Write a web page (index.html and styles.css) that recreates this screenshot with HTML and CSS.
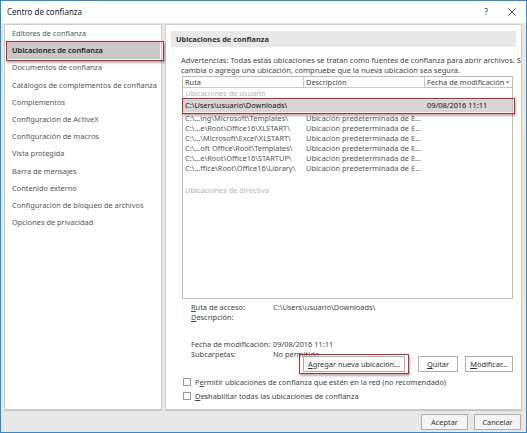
FILE: index.html
```html
<!DOCTYPE html>
<html lang="es">
<head>
<meta charset="utf-8">
<title>Centro de confianza</title>
<link rel="stylesheet" href="styles.css">
</head>
<body>
<div class="window">
  <div class="titlebar">
    <span class="title">Centro de confianza</span>
    <span class="tb-btns">
      <span class="help">?</span>
      <svg class="close" width="8" height="8" viewBox="0 0 8 8"><path d="M0.5 0.5L7.5 7.5M7.5 0.5L0.5 7.5" stroke="#444" stroke-width="0.9" fill="none"/></svg>
    </span>
  </div>
  <div class="main">
    <nav class="nav">
      <div class="nav-item">Editores de confianza</div>
      <div class="nav-item selected annotated">Ubicaciones de confianza</div>
      <div class="nav-item">Documentos de confianza</div>
      <div class="nav-item">Catálogos de complementos de confianza</div>
      <div class="nav-item">Complementos</div>
      <div class="nav-item">Configuración de ActiveX</div>
      <div class="nav-item">Configuración de macros</div>
      <div class="nav-item">Vista protegida</div>
      <div class="nav-item">Barra de mensajes</div>
      <div class="nav-item">Contenido externo</div>
      <div class="nav-item">Configuración de bloqueo de archivos</div>
      <div class="nav-item">Opciones de privacidad</div>
    </nav>
    <section class="content">
      <div class="section-head">Ubicaciones de confianza</div>
      <p class="warning">Advertencias: Todas estas ubicaciones se tratan como fuentes de confianza para abrir archivos. Si<br>cambia o agrega una ubicación, compruebe que la nueva ubicación sea segura.</p>
      <div class="list">
        <div class="list-head">
          <div class="hcell c1">Ruta</div>
          <div class="hcell c2">Descripción</div>
          <div class="hcell c3">Fecha de modificación <span class="arrow">▾</span></div>
        </div>
        <div class="group">Ubicaciones de usuario</div>
        <div class="row selected annotated"><span class="c1">C:\Users\usuario\Downloads\</span><span class="c2"></span><span class="c3">09/08/2016 11:11</span></div>
        <div class="row"><span class="c1">C:\...ing\Microsoft\Templates\</span><span class="c2">Ubicación predeterminada de E...</span><span class="c3"></span></div>
        <div class="row"><span class="c1">C:\...e\Root\Office16\XLSTART\</span><span class="c2">Ubicación predeterminada de E...</span><span class="c3"></span></div>
        <div class="row"><span class="c1">C:\...\Microsoft\Excel\XLSTART\</span><span class="c2">Ubicación predeterminada de E...</span><span class="c3"></span></div>
        <div class="row"><span class="c1">C:\...oft Office\Root\Templates\</span><span class="c2">Ubicación predeterminada de E...</span><span class="c3"></span></div>
        <div class="row"><span class="c1">C:\...e\Root\Office16\STARTUP\</span><span class="c2">Ubicación predeterminada de E...</span><span class="c3"></span></div>
        <div class="row"><span class="c1">C:\...ffice\Root\Office16\Library\</span><span class="c2">Ubicación predeterminada de E...</span><span class="c3"></span></div>
        <div class="group group-gap">Ubicaciones de directiva</div>
      </div>
      <div class="details">
        <span class="label"><u>R</u>uta de acceso:</span><span class="value">C:\Users\usuario\Downloads\</span>
        <span class="label"><u>D</u>escripción:</span><span class="value"></span>
        <span class="label spaced">Fecha de modificación:</span><span class="value spaced">09/08/2016 11:11</span>
        <span class="label">Subcarpetas:</span><span class="value">No permitido</span>
      </div>
      <div class="actions">
        <button class="btn btn-add annotated"><u>A</u>gregar nueva ubicación...</button>
        <button class="btn btn-quit"><u>Q</u>uitar</button>
        <button class="btn btn-mod"><u>M</u>odificar...</button>
      </div>
      <label class="check"><span class="box"></span>P<u>e</u>rmitir ubicaciones de confianza que estén en la red (no recomendado)</label>
      <label class="check"><span class="box"></span><u>D</u>eshabilitar todas las ubicaciones de confianza</label>
    </section>
  </div>
  <div class="footer">
    <button class="btn btn-foot">Aceptar</button>
    <button class="btn btn-foot">Cancelar</button>
  </div>
</div>
</body>
</html>
```
FILE: styles.css
```css
* { box-sizing: border-box; }
html, body { margin: 0; padding: 0; }
body {
  font-family: "Noto Sans", "Open Sans", sans-serif;
  font-size: 7.4px;
  color: #444;
  background: #fff;
}
.window {
  width: 527px;
  height: 433px;
  border: 1px solid #2a8ad8;
  background: #e8e8e8;
  display: flex;
  flex-direction: column;
}
.titlebar {
  height: 22px;
  background: #fff;
  display: flex;
  align-items: center;
  justify-content: space-between;
  padding: 0 10px 1px 6px;
}
.title { font-size: 8px; color: #222; }
.tb-btns { display: flex; align-items: center; gap: 20px; }
.help { font-size: 8.5px; color: #333; }
.close { display: block; }

.main {
  height: 387px;
  padding: 1px 4px 0 3px;
  display: flex;
  gap: 3px;
}
.nav {
  flex: 0 0 158px;
  width: 158px;
  height: 386px;
  background: #fff;
  border: 1px solid #cdcdcd;
  box-shadow: 0 1px 0 #c4c4c4;
}
.nav-item {
  height: 17.2px;
  line-height: 17.2px;
  margin: 0 1px 0 2px;
  padding-left: 5px;
  color: #555;
  white-space: nowrap;
}
.nav-item.selected {
  background: #c8c8c8;
  color: #222;
  font-weight: 600;
}

.annotated { position: relative; }
.annotated::after {
  content: "";
  position: absolute;
  border: 1.5px solid #c9262b;
  box-shadow: 1px 2px 2px rgba(0,0,0,0.3);
  pointer-events: none;
}
.nav-item.annotated::after { top: -1.5px; bottom: -1.5px; left: -1px; right: -4px; }

.content {
  flex: 0 0 357px;
  width: 357px;
  min-width: 0;
  height: 386px;
  overflow: hidden;
  background: #fff;
  border: 1px solid #cdcdcd;
  box-shadow: 0 1px 0 #c4c4c4;
  padding-top: 6px;
}
.section-head {
  height: 16px;
  line-height: 16px;
  margin: 0 5px;
  padding-left: 5px;
  background: #e8e8e8;
  font-weight: 700;
  color: #333;
}
.warning {
  margin: 8px 0 1px 15px;
  font-size: 7.5px;
  line-height: 10px;
  color: #444;
  white-space: nowrap;
}
.list {
  width: 331px;
  height: 223px;
  margin-left: 16px;
  border: 1px solid #bdbdbd;
}
.list-head {
  display: flex;
  height: 11px;
}
.hcell {
  line-height: 10px;
  border-right: 1px solid #c8c8c8;
  border-bottom: 1px solid #c8c8c8;
  padding-left: 2px;
  color: #444;
  white-space: nowrap;
}
.hcell.c1 { width: 121px; }
.hcell.c2 { width: 121px; }
.hcell.c3 { flex: 1; border-right: none; display: flex; justify-content: space-between; padding-right: 3px; }
.arrow { color: #888; font-size: 6px; }
.group {
  height: 10px;
  line-height: 10px;
  padding-left: 2px;
  color: #b4b4b4;
}
.group-gap { margin-top: 12px; }
.row {
  display: flex;
  height: 10px;
  line-height: 10px;
  color: #555;
  white-space: nowrap;
}
.row .c1 { width: 121px; padding-left: 2px; overflow: hidden; }
.row .c2 { width: 121px; padding-left: 2px; overflow: hidden; }
.row .c3 { flex: 1; padding-left: 2px; }
.row.selected {
  height: 13px;
  line-height: 13px;
  margin: 1px 0;
  background: #d6d6d6;
  color: #111;
}
.row.annotated::after { top: -1.5px; bottom: -1.5px; left: -1.5px; right: -3px; }

.details {
  display: grid;
  grid-template-columns: 82px 200px;
  margin: 3px 0 0 25px;
  line-height: 10px;
  color: #444;
}
.details .label { grid-column: 1; white-space: nowrap; }
.details .value { grid-column: 2; white-space: nowrap; }
.details .spaced { margin-top: 17px; }

.actions {
  display: flex;
  justify-content: flex-end;
  margin: -3px 8px 0 0;
  gap: 7px;
}
.btn {
  font-family: inherit;
  font-size: 7.4px;
  color: #333;
  height: 16px;
  padding: 0;
  margin: 0;
  background: #fdfdfd;
  border: 1px solid #adadad;
  border-radius: 0;
}
.btn-add { width: 102px; margin-right: 6px; }
.btn-add.annotated::after { top: -3px; bottom: -3px; left: -5px; right: -5px; }
.btn-quit { width: 40px; }
.btn-mod { width: 48px; }

.check {
  display: flex;
  align-items: center;
  height: 14px;
  margin-left: 17px;
  color: #444;
  white-space: nowrap;
}
.check:first-of-type { margin-top: 3px; }
.box {
  width: 8px;
  height: 8px;
  border: 1px solid #9a9a9a;
  background: #fff;
  margin-right: 4px;
}

.footer {
  flex: 1;
  display: flex;
  justify-content: flex-end;
  gap: 6px;
  padding: 4px 5px 0 0;
}
.btn-foot { width: 47px; background: #f4f4f4; }
```
